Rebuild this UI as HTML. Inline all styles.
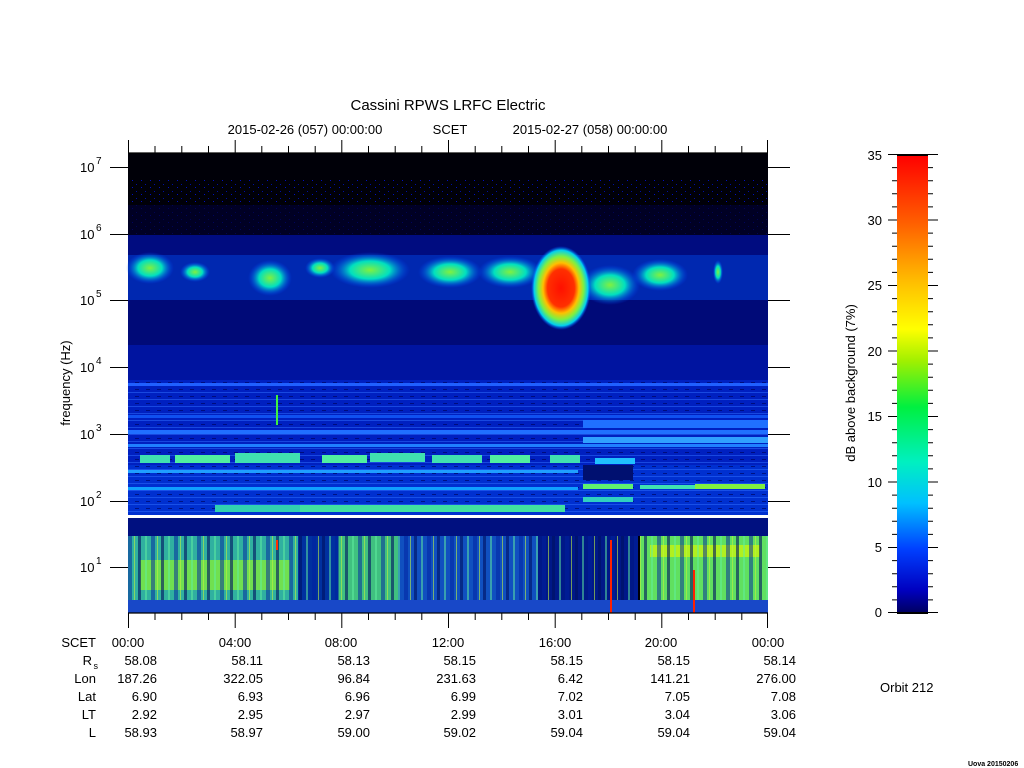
<!DOCTYPE html>
<html><head><style>
html,body{margin:0;padding:0;background:#fff;width:1024px;height:768px;overflow:hidden}
svg{display:block}
text{font-family:"Liberation Sans",sans-serif;fill:#000}
</style></head><body>
<svg width="1024" height="768" viewBox="0 0 1024 768" xmlns="http://www.w3.org/2000/svg">
<defs>
<linearGradient id="cb" x1="0" y1="1" x2="0" y2="0">
<stop offset="0" stop-color="#000060"/>
<stop offset="0.05" stop-color="#0000c0"/>
<stop offset="0.14" stop-color="#0040ff"/>
<stop offset="0.24" stop-color="#00c0ff"/>
<stop offset="0.33" stop-color="#00f0c0"/>
<stop offset="0.45" stop-color="#00f040"/>
<stop offset="0.55" stop-color="#a0f000"/>
<stop offset="0.62" stop-color="#ffff00"/>
<stop offset="0.72" stop-color="#ffc000"/>
<stop offset="0.85" stop-color="#ff6000"/>
<stop offset="1" stop-color="#ff0000"/>
</linearGradient>
<radialGradient id="blob" cx="0.5" cy="0.5" r="0.5">
<stop offset="0" stop-color="#ff1000"/>
<stop offset="0.45" stop-color="#ff3000"/>
<stop offset="0.6" stop-color="#ffc000"/>
<stop offset="0.75" stop-color="#80f040"/>
<stop offset="0.9" stop-color="#00d0f0"/>
<stop offset="1" stop-color="#0040ff" stop-opacity="0"/>
</radialGradient>
<radialGradient id="pg" cx="0.5" cy="0.5" r="0.5">
<stop offset="0" stop-color="#80f040"/>
<stop offset="0.5" stop-color="#00e0c0"/>
<stop offset="1" stop-color="#0040ff" stop-opacity="0"/>
</radialGradient>
<pattern id="vs" width="23" height="10" patternUnits="userSpaceOnUse">
<rect x="0" y="0" width="3" height="10" fill="#001060" opacity="0.6"/>
<rect x="7" y="0" width="2" height="10" fill="#60f0a0" opacity="0.5"/>
<rect x="13" y="0" width="4" height="10" fill="#0020a0" opacity="0.5"/>
<rect x="19" y="0" width="1" height="10" fill="#c0f040" opacity="0.6"/>
</pattern>
<pattern id="hs" width="11" height="7" patternUnits="userSpaceOnUse">
<rect x="0" y="0" width="11" height="1" fill="#3070ff" opacity="0.5"/>
<rect x="3" y="4" width="4" height="1" fill="#000050" opacity="0.6"/>
</pattern>
<pattern id="dots" width="9" height="7" patternUnits="userSpaceOnUse">
<rect x="1" y="2" width="1" height="1" fill="#0010a0"/>
<rect x="6" y="5" width="1" height="1" fill="#0010c0"/>
</pattern>
</defs>

<text x="448" y="110" font-size="15" text-anchor="middle">Cassini RPWS LRFC Electric</text>
<text x="305" y="134" font-size="13" text-anchor="middle">2015-02-26 (057) 00:00:00</text>
<text x="450" y="134" font-size="13" text-anchor="middle">SCET</text>
<text x="590" y="134" font-size="13" text-anchor="middle">2015-02-27 (058) 00:00:00</text>

<!-- spectrogram -->
<rect x="128" y="153" width="640" height="460" fill="#000008"/>
<rect x="128" y="180" width="640" height="55" fill="url(#dots)"/>
<rect x="128" y="205" width="640" height="30" fill="#000030" opacity="0.7"/>
<rect x="128" y="235" width="640" height="20" fill="#000c80"/>
<rect x="128" y="255" width="640" height="45" fill="#0028b0"/>
<rect x="128" y="300" width="640" height="45" fill="#000a78"/>
<rect x="128" y="345" width="640" height="35" fill="#0014a0"/>
<rect x="128" y="380" width="640" height="85" fill="#0020c0"/>
<rect x="128" y="465" width="640" height="50" fill="#0030d0"/>
<rect x="128" y="380" width="640" height="135" fill="url(#hs)"/>
<rect x="128" y="383" width="640" height="3" fill="#2060ff"/>
<rect x="128" y="415" width="640" height="3" fill="#1050f0"/>
<rect x="128" y="430" width="640" height="4" fill="#2070ff"/>
<rect x="128" y="444" width="640" height="3" fill="#2080ff"/>
<rect x="583" y="420" width="185" height="8" fill="#2070ff"/>
<rect x="583" y="437" width="185" height="6" fill="#30a0ff"/>
<rect x="583" y="465" width="50" height="15" fill="#001070"/>
<!-- bright bands -->
<rect x="140" y="455" width="30" height="8" fill="#40e0b0"/>
<rect x="175" y="455" width="55" height="8" fill="#50f0a0"/>
<rect x="235" y="453" width="65" height="10" fill="#40e0b0"/>
<rect x="322" y="455" width="45" height="8" fill="#50f0a0"/>
<rect x="370" y="453" width="55" height="9" fill="#40e0b0"/>
<rect x="432" y="455" width="50" height="8" fill="#40e0b0"/>
<rect x="490" y="455" width="40" height="8" fill="#50f0a0"/>
<rect x="550" y="455" width="30" height="8" fill="#40e0b0"/>
<rect x="128" y="470" width="450" height="3" fill="#20a0ff"/>
<rect x="595" y="458" width="40" height="6" fill="#20c0ff"/>
<rect x="583" y="484" width="50" height="5" fill="#60f070"/>
<rect x="640" y="485" width="55" height="4" fill="#40e0b0"/>
<rect x="695" y="484" width="70" height="5" fill="#80f040"/>
<rect x="128" y="487" width="450" height="3" fill="#10a0ff"/>
<rect x="583" y="497" width="50" height="5" fill="#30d0c0"/>
<rect x="215" y="505" width="85" height="7" fill="#30d0b0"/>
<rect x="300" y="505" width="265" height="7" fill="#40e0a0"/>
<rect x="128" y="515" width="640" height="3" fill="#ffffff"/>
<rect x="128" y="518" width="640" height="18" fill="#001080"/>
<!-- low freq -->
<rect x="128" y="536" width="170" height="64" fill="#30b0a0"/>
<rect x="140" y="560" width="150" height="30" fill="#70e050"/>
<rect x="298" y="536" width="40" height="64" fill="#0030a0"/>
<rect x="338" y="536" width="60" height="64" fill="#40c080"/>
<rect x="398" y="536" width="140" height="64" fill="#1050c0"/>
<rect x="538" y="536" width="100" height="64" fill="#001888"/>
<rect x="640" y="536" width="128" height="64" fill="#60e060"/>
<rect x="650" y="545" width="110" height="12" fill="#b0f020"/>
<rect x="128" y="536" width="640" height="64" fill="url(#vs)"/>
<rect x="128" y="600" width="640" height="13" fill="#1848c8"/>
<rect x="610" y="540" width="2" height="73" fill="#ff2000"/>
<rect x="693" y="570" width="2" height="43" fill="#ff2000"/>
<rect x="276" y="540" width="2" height="10" fill="#ff3000"/>
<!-- upper patches -->
<ellipse cx="150" cy="268" rx="24" ry="16" fill="url(#pg)"/>
<ellipse cx="195" cy="272" rx="15" ry="10" fill="url(#pg)"/>
<ellipse cx="270" cy="278" rx="22" ry="18" fill="url(#pg)"/>
<ellipse cx="320" cy="268" rx="15" ry="10" fill="url(#pg)"/>
<ellipse cx="370" cy="270" rx="40" ry="18" fill="url(#pg)"/>
<ellipse cx="450" cy="272" rx="32" ry="16" fill="url(#pg)"/>
<ellipse cx="510" cy="272" rx="32" ry="16" fill="url(#pg)"/>
<ellipse cx="610" cy="285" rx="30" ry="20" fill="url(#pg)"/>
<ellipse cx="660" cy="275" rx="28" ry="16" fill="url(#pg)"/>
<ellipse cx="718" cy="272" rx="5" ry="12" fill="url(#pg)"/>
<ellipse cx="561" cy="288" rx="30" ry="42" fill="url(#blob)"/>
<rect x="276" y="395" width="2" height="30" fill="#40f040"/>

<g stroke="#000" stroke-width="1.3" fill="none">
<line x1="128" y1="153" x2="768" y2="153"/>
<line x1="128" y1="613" x2="768" y2="613"/>
</g>
<g stroke="#000" stroke-width="1">
<path d="M128.5 140V153M235.2 140V153M341.8 140V153M448.5 140V153M555.2 140V153M661.8 140V153M767.5 140V153
M128.5 613V628M235.2 613V628M341.8 613V628M448.5 613V628M555.2 613V628M661.8 613V628M767.5 613V628
M155 146V153M181.8 146V153M208.5 146V153M261.8 146V153M288.5 146V153M315.2 146V153M368.5 146V153M395.2 146V153M421.8 146V153M475.2 146V153M501.8 146V153M528.5 146V153M581.8 146V153M608.5 146V153M635.2 146V153M688.5 146V153M715.2 146V153M741.8 146V153
M155 613V620M181.8 613V620M208.5 613V620M261.8 613V620M288.5 613V620M315.2 613V620M368.5 613V620M395.2 613V620M421.8 613V620M475.2 613V620M501.8 613V620M528.5 613V620M581.8 613V620M608.5 613V620M635.2 613V620M688.5 613V620M715.2 613V620M741.8 613V620
M110 167.5H128M110 234.5H128M110 300.5H128M110 367.5H128M110 434.5H128M110 501.5H128M110 567.5H128
M768 167.5H790M768 234.5H790M768 300.5H790M768 367.5H790M768 434.5H790M768 501.5H790M768 567.5H790"/>
</g>
<g font-size="13">
<text x="80" y="172">10</text><text x="96" y="164" font-size="10">7</text>
<text x="80" y="239">10</text><text x="96" y="231" font-size="10">6</text>
<text x="80" y="305">10</text><text x="96" y="297" font-size="10">5</text>
<text x="80" y="372">10</text><text x="96" y="364" font-size="10">4</text>
<text x="80" y="439">10</text><text x="96" y="431" font-size="10">3</text>
<text x="80" y="506">10</text><text x="96" y="498" font-size="10">2</text>
<text x="80" y="572">10</text><text x="96" y="564" font-size="10">1</text>
</g>
<text transform="translate(70,383) rotate(-90)" font-size="13" text-anchor="middle">frequency (Hz)</text>

<g font-size="13">
<g text-anchor="end">
<text x="96" y="647">SCET</text>
<text x="92" y="665">R</text><text x="98" y="669" font-size="9">s</text>
<text x="96" y="683">Lon</text>
<text x="96" y="701">Lat</text>
<text x="96" y="719">LT</text>
<text x="96" y="737">L</text>
</g>
<g text-anchor="middle">
<text x="128" y="647">00:00</text><text x="235" y="647">04:00</text><text x="341" y="647">08:00</text><text x="448" y="647">12:00</text><text x="555" y="647">16:00</text><text x="661" y="647">20:00</text><text x="768" y="647">00:00</text>
</g>
<g text-anchor="end">
<text x="157" y="665">58.08</text><text x="263" y="665">58.11</text><text x="370" y="665">58.13</text><text x="476" y="665">58.15</text><text x="583" y="665">58.15</text><text x="690" y="665">58.15</text><text x="796" y="665">58.14</text>
<text x="157" y="683">187.26</text><text x="263" y="683">322.05</text><text x="370" y="683">96.84</text><text x="476" y="683">231.63</text><text x="583" y="683">6.42</text><text x="690" y="683">141.21</text><text x="796" y="683">276.00</text>
<text x="157" y="701">6.90</text><text x="263" y="701">6.93</text><text x="370" y="701">6.96</text><text x="476" y="701">6.99</text><text x="583" y="701">7.02</text><text x="690" y="701">7.05</text><text x="796" y="701">7.08</text>
<text x="157" y="719">2.92</text><text x="263" y="719">2.95</text><text x="370" y="719">2.97</text><text x="476" y="719">2.99</text><text x="583" y="719">3.01</text><text x="690" y="719">3.04</text><text x="796" y="719">3.06</text>
<text x="157" y="737">58.93</text><text x="263" y="737">58.97</text><text x="370" y="737">59.00</text><text x="476" y="737">59.02</text><text x="583" y="737">59.04</text><text x="690" y="737">59.04</text><text x="796" y="737">59.04</text>
</g>
<text x="880" y="692">Orbit 212</text>
</g>
<text x="968" y="766" font-size="7" font-weight="bold">Uova 20150206</text>

<rect x="897" y="155" width="31" height="458" fill="url(#cb)"/>
<rect x="897" y="154" width="31" height="2" fill="#000"/>
<rect x="897" y="612" width="31" height="2" fill="#000"/>
<g stroke="#000" stroke-width="1">
<path d="M888 154.5H897M888 220H897M888 285.5H897M888 351H897M888 416.5H897M888 482H897M888 547.5H897M888 612.5H897
M928 154.5H938M928 220H938M928 285.5H938M928 351H938M928 416.5H938M928 482H938M928 547.5H938M928 612.5H938
M892 167.6H897M892 180.7H897M892 193.8H897M892 206.9H897M892 233.1H897M892 246.2H897M892 259.3H897M892 272.4H897M892 298.6H897M892 311.7H897M892 324.8H897M892 337.9H897M892 364.1H897M892 377.2H897M892 390.3H897M892 403.4H897M892 429.6H897M892 442.7H897M892 455.8H897M892 468.9H897M892 495.1H897M892 508.2H897M892 521.3H897M892 534.4H897M892 560.6H897M892 573.7H897M892 586.8H897M892 599.9H897
M928 167.6H933M928 180.7H933M928 193.8H933M928 206.9H933M928 233.1H933M928 246.2H933M928 259.3H933M928 272.4H933M928 298.6H933M928 311.7H933M928 324.8H933M928 337.9H933M928 364.1H933M928 377.2H933M928 390.3H933M928 403.4H933M928 429.6H933M928 442.7H933M928 455.8H933M928 468.9H933M928 495.1H933M928 508.2H933M928 521.3H933M928 534.4H933M928 560.6H933M928 573.7H933M928 586.8H933M928 599.9H933"/>
</g>
<g font-size="13" text-anchor="end">
<text x="882" y="160">35</text><text x="882" y="225">30</text><text x="882" y="290">25</text><text x="882" y="356">20</text><text x="882" y="421">15</text><text x="882" y="487">10</text><text x="882" y="552">5</text><text x="882" y="617">0</text>
</g>
<text transform="translate(855,383) rotate(-90)" font-size="13" text-anchor="middle">dB above background (7%)</text>
</svg>
</body></html>
